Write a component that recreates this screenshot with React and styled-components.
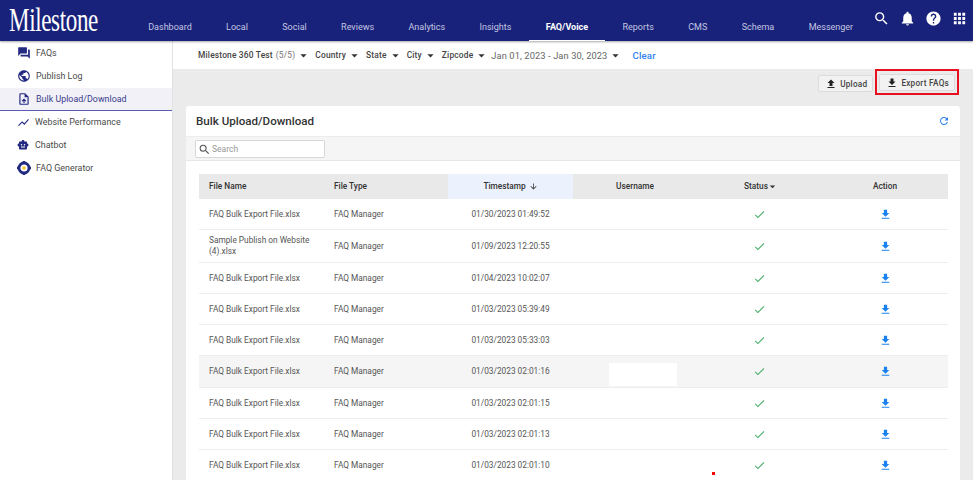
import React from 'react';
import styled, { createGlobalStyle } from 'styled-components';
import {
  MdQuestionAnswer, MdPublic, MdUploadFile, MdShowChart, MdSmartToy, MdSearch,
  MdNotifications, MdHelp, MdApps, MdFileUpload, MdFileDownload, MdCheck,
  MdRefresh, MdArrowDownward, MdArrowDropDown,
} from 'react-icons/md';

const GlobalStyle = createGlobalStyle`
  html, body { margin: 0; padding: 0; background: #ebebeb; }
  body { font-family: Roboto, "Liberation Sans", sans-serif; color: #444; }
  * { box-sizing: border-box; }
`;

const Page = styled.div`
  width: 973px;
  height: 480px;
  overflow: hidden;
  position: relative;
  display: flex;
  flex-direction: column;
`;

const Header = styled.header`
  height: 41px;
  flex: none;
  background: #19227b;
  box-shadow: 0 1px 2px rgba(0, 0, 0, 0.35);
  display: flex;
  position: relative;
  z-index: 2;
`;

const Logo = styled.div`
  width: 131px;
  height: 38px;
  flex: none;
  padding: 1px 0 0 9px;
  color: #fff;
  font: 30px/34px "Liberation Serif", serif;
  letter-spacing: -0.5px;
  transform: scale(0.77, 1.1);
  transform-origin: 9px 0;
  white-space: nowrap;
`;

const Nav = styled.nav`
  display: flex;
  height: 41px;
`;

const NavItem = styled.a`
  padding: 21px 17.2px 0;
  font-size: 9px;
  line-height: 13px;
  white-space: nowrap;
  color: ${(p) => (p.$active ? '#fff' : '#c3c6e0')};
  font-weight: ${(p) => (p.$active ? 700 : 400)};
  border-bottom: 1px solid ${(p) => (p.$active ? '#fff' : 'transparent')};
`;

const HeaderIcons = styled.div`
  margin-left: auto;
  display: flex;
  gap: 9px;
  padding: 10px 5px 0 0;
  color: #fff;
  font-size: 17px;
  & > svg { display: block; }
`;

const Body = styled.div`
  flex: 1;
  display: flex;
  min-height: 0;
`;

const Sidebar = styled.aside`
  width: 173px;
  flex: none;
  background: #fff;
  border-right: 1px solid #e2e2e2;
`;

const SideItem = styled.div`
  height: ${(p) => p.$h}px;
  display: flex;
  align-items: center;
  gap: ${(p) => p.$gap}px;
  padding-left: 17px;
  font-size: 8.9px;
  letter-spacing: 0.02px;
  color: ${(p) => (p.$active ? '#3a3c8c' : '#4a4a4a')};
  background: ${(p) => (p.$active ? '#f2f1f8' : 'transparent')};
  border-bottom: 1px solid ${(p) => (p.$active ? '#5a5cae' : 'transparent')};
  & > svg { color: #232a80; flex: none; }
`;

const Main = styled.main`
  flex: 1;
  min-width: 0;
`;

const FilterBar = styled.div`
  height: 28px;
  background: #fff;
  display: flex;
  align-items: center;
  padding: 0 0 0 25px;
  font-size: 8.4px;
  font-weight: 500;
  letter-spacing: 0.18px;
  color: #444;
  white-space: nowrap;
`;

const Filter = styled.span`
  display: flex;
  align-items: center;
  margin-right: ${(p) => p.$mr}px;
  & small { font-size: 8.4px; font-weight: 400; color: #777; margin-left: 3px; }
  & svg { font-size: 15px; color: #333; margin-left: 1px; }
`;

const DateFilter = styled(Filter)`
  font-size: 9.3px;
  font-weight: 400;
  color: #666;
  letter-spacing: 0.1px;
`;

const ClearLink = styled.a`
  font-size: 9.6px;
  font-weight: 500;
  color: #2f80ed;
`;

const Actions = styled.div`
  height: 37px;
  display: flex;
  justify-content: flex-end;
  align-items: flex-start;
  padding: 0 14px 0 0;
  gap: 2px;
`;

const ActionButton = styled.button`
  height: 17px;
  padding: 0 5px 0 6px;
  display: flex;
  align-items: center;
  gap: 3px;
  background: #f2f2f2;
  border: 1px solid #dcdcdc;
  border-radius: 2px;
  font: 500 8.2px Roboto, sans-serif;
  letter-spacing: 0.25px;
  color: #444;
  white-space: nowrap;
  & svg { font-size: 12px; color: #222; }
`;

const UploadSlot = styled.div`
  padding-top: 6px;
`;

const Highlight = styled.div`
  border: 2px solid #e8101f;
  padding: 3px 2px;
  height: 26px;
`;

const Card = styled.section`
  width: 774px;
  margin-left: 13px;
  background: #fff;
  border-radius: 3px 3px 0 0;
`;

const CardHead = styled.div`
  height: 30px;
  display: flex;
  align-items: center;
  justify-content: space-between;
  padding: 0 10px 1px 10px;
  font-size: 11.6px;
  font-weight: 500;
  color: #333;
  & svg { font-size: 12px; color: #2f80ed; }
`;

const SearchBar = styled.div`
  height: 25px;
  background: #f5f5f5;
  border-top: 1px solid #ececec;
  border-bottom: 1px solid #e6e6e6;
  padding: 3px 0 0 9px;
`;

const SearchBox = styled.div`
  width: 130px;
  height: 18px;
  background: #fff;
  border: 1px solid #d8d8d8;
  border-radius: 2px;
  display: flex;
  align-items: center;
  gap: 1px;
  padding-left: 2px;
  font-size: 8.5px;
  color: #999;
  & svg { font-size: 13px; color: #555; }
`;

const Table = styled.div`
  margin: 13px 12px 0 13px;
`;

const Row = styled.div`
  display: grid;
  grid-template-columns: 125px 124px 125px 124px 125px 126px;
  align-items: center;
  height: ${(p) => p.$h || 31}px;
  font-size: 8.3px;
  color: #555;
  background: ${(p) => (p.$shade ? '#f5f5f5' : '#fff')};
  border-bottom: 1px solid #eeeeee;
`;

const HeadRow = styled(Row)`
  height: 25px;
  background: #e9e9e9;
  border-bottom: 0;
  font-weight: 500;
  color: #333;
  align-items: stretch;
`;

const Cell = styled.div`
  display: flex;
  align-items: center;
  height: 100%;
  line-height: 11px;
  justify-content: ${(p) => (p.$center ? 'center' : 'flex-start')};
  padding-left: ${(p) => (p.$center ? 0 : 10)}px;
  padding-right: ${(p) => (p.$center ? 0 : 8)}px;
  background: ${(p) => (p.$sorted ? '#ebf2fd' : 'transparent')};
  position: relative;
`;

const SortArrow = styled(MdArrowDownward)`
  font-size: 9px;
  margin-left: 3px;
`;

const StatusCaret = styled(MdArrowDropDown)`
  font-size: 13px;
  margin-left: -2px;
  margin-right: -4px;
`;

const CheckIcon = styled(MdCheck)`
  font-size: 13px;
  color: #4caf6a;
`;

const DownloadIcon = styled(MdFileDownload)`
  font-size: 13px;
  color: #1a82f0;
`;

const Redaction = styled.div`
  position: absolute;
  left: 36px;
  top: 7px;
  width: 68px;
  height: 23px;
  background: #fff;
`;

const RedDot = styled.div`
  position: absolute;
  left: 712px;
  top: 472px;
  width: 3px;
  height: 3px;
  background: #f00;
`;

function FaqGeneratorIcon() {
  return (
    <svg width="14" height="14" viewBox="0 0 14 14">
      <circle cx="7" cy="7" r="5" fill="#fff" stroke="#232a80" strokeWidth="2.8" />
      <circle cx="7" cy="7" r="1.8" fill="#f5c431" />
      <g fill="#232a80">
        <rect x="5.8" y="0" width="2.4" height="2" />
        <rect x="5.8" y="12" width="2.4" height="2" />
        <rect x="0" y="5.8" width="2" height="2.4" />
        <rect x="12" y="5.8" width="2" height="2.4" />
      </g>
    </svg>
  );
}

const navItems = ['Dashboard', 'Local', 'Social', 'Reviews', 'Analytics', 'Insights', 'FAQ/Voice', 'Reports', 'CMS', 'Schema', 'Messenger'];

const rows = [
  { name: 'FAQ Bulk Export File.xlsx', time: '01/30/2023 01:49:52', h: 31 },
  { name: 'Sample Publish on Website (4).xlsx', time: '01/09/2023 12:20:55', h: 33 },
  { name: 'FAQ Bulk Export File.xlsx', time: '01/04/2023 10:02:07', h: 31 },
  { name: 'FAQ Bulk Export File.xlsx', time: '01/03/2023 05:39:49', h: 31 },
  { name: 'FAQ Bulk Export File.xlsx', time: '01/03/2023 05:33:03', h: 31 },
  { name: 'FAQ Bulk Export File.xlsx', time: '01/03/2023 02:01:16', h: 32, shade: true, hidden: true },
  { name: 'FAQ Bulk Export File.xlsx', time: '01/03/2023 02:01:15', h: 31 },
  { name: 'FAQ Bulk Export File.xlsx', time: '01/03/2023 02:01:13', h: 31 },
  { name: 'FAQ Bulk Export File.xlsx', time: '01/03/2023 02:01:10', h: 31 },
];

export default function App() {
  return (
    <Page>
      <GlobalStyle />
      <Header>
        <Logo>Milestone</Logo>
        <Nav>
          {navItems.map((item) => (
            <NavItem key={item} $active={item === 'FAQ/Voice'}>{item}</NavItem>
          ))}
        </Nav>
        <HeaderIcons>
          <MdSearch />
          <MdNotifications />
          <MdHelp />
          <MdApps />
        </HeaderIcons>
      </Header>
      <Body>
        <Sidebar>
          <SideItem $h={24} $gap={5}><MdQuestionAnswer size={14} />FAQs</SideItem>
          <SideItem $h={23} $gap={5}><MdPublic size={14} />Publish Log</SideItem>
          <SideItem $h={23} $gap={5} $active><MdUploadFile size={14} />Bulk Upload/Download</SideItem>
          <SideItem $h={23} $gap={5}><MdShowChart size={13} />Website Performance</SideItem>
          <SideItem $h={22} $gap={6}><MdSmartToy size={12} />Chatbot</SideItem>
          <SideItem $h={24} $gap={5}><FaqGeneratorIcon />FAQ Generator</SideItem>
        </Sidebar>
        <Main>
          <FilterBar>
            <Filter $mr={4}>Milestone 360 Test<small>(5/5)</small><MdArrowDropDown /></Filter>
            <Filter $mr={4}>Country<MdArrowDropDown /></Filter>
            <Filter $mr={4}>State<MdArrowDropDown /></Filter>
            <Filter $mr={4}>City<MdArrowDropDown /></Filter>
            <Filter $mr={2}>Zipcode<MdArrowDropDown /></Filter>
            <DateFilter $mr={9}>Jan 01, 2023 - Jan 30, 2023<MdArrowDropDown /></DateFilter>
            <ClearLink>Clear</ClearLink>
          </FilterBar>
          <Actions>
            <UploadSlot>
              <ActionButton><MdFileUpload />Upload</ActionButton>
            </UploadSlot>
            <Highlight>
              <ActionButton><MdFileDownload />Export FAQs</ActionButton>
            </Highlight>
          </Actions>
          <Card>
            <CardHead>Bulk Upload/Download<MdRefresh /></CardHead>
            <SearchBar>
              <SearchBox><MdSearch />Search</SearchBox>
            </SearchBar>
            <Table>
              <HeadRow>
                <Cell>File Name</Cell>
                <Cell>File Type</Cell>
                <Cell $center $sorted>Timestamp<SortArrow /></Cell>
                <Cell $center>Username</Cell>
                <Cell $center>Status<StatusCaret /></Cell>
                <Cell $center>Action</Cell>
              </HeadRow>
              {rows.map((row) => (
                <Row key={row.time} $h={row.h} $shade={row.shade}>
                  <Cell>{row.name}</Cell>
                  <Cell>FAQ Manager</Cell>
                  <Cell $center>{row.time}</Cell>
                  <Cell $center>{row.hidden && <Redaction />}</Cell>
                  <Cell $center><CheckIcon /></Cell>
                  <Cell $center><DownloadIcon /></Cell>
                </Row>
              ))}
            </Table>
          </Card>
        </Main>
      </Body>
      <RedDot />
    </Page>
  );
}
